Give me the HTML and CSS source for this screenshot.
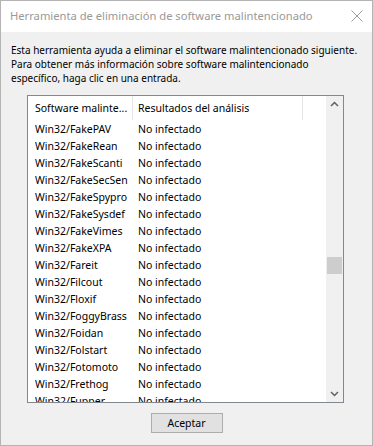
FILE: index.html
```html
<!DOCTYPE html>
<html lang="es">
<head>
    <meta charset="UTF-8">
    <title>Herramienta de eliminación de software malintencionado</title>
    <link rel="stylesheet" href="styles.css">
</head>
<body>
    <div class="window">
        <div class="titlebar">
            <span class="title">Herramienta de eliminación de software malintencionado</span>
            <svg class="close" width="12" height="12" viewBox="0 0 12 12">
                <path d="M0.5 0.5 L11.5 11.5 M11.5 0.5 L0.5 11.5" stroke="#9a9a9a" stroke-width="1" fill="none"/>
            </svg>
        </div>
        <div class="content">
            <p class="intro">Esta herramienta ayuda a eliminar el software malintencionado siguiente.<br>
            Para obtener más información sobre software malintencionado<br>
            específico, haga clic en una entrada.</p>

            <div class="listbox">
                <div class="table">
                    <div class="head">
                        <div class="c1">Software malinte...</div>
                        <div class="c2">Resultados del análisis</div>
                        <div class="c3"></div>
                    </div>
                    <div class="rows">
                        <div class="row"><div class="c1">Win32/FakePAV</div><div class="c2">No infectado</div></div>
                        <div class="row"><div class="c1">Win32/FakeRean</div><div class="c2">No infectado</div></div>
                        <div class="row"><div class="c1">Win32/FakeScanti</div><div class="c2">No infectado</div></div>
                        <div class="row"><div class="c1">Win32/FakeSecSen</div><div class="c2">No infectado</div></div>
                        <div class="row"><div class="c1">Win32/FakeSpypro</div><div class="c2">No infectado</div></div>
                        <div class="row"><div class="c1">Win32/FakeSysdef</div><div class="c2">No infectado</div></div>
                        <div class="row"><div class="c1">Win32/FakeVimes</div><div class="c2">No infectado</div></div>
                        <div class="row"><div class="c1">Win32/FakeXPA</div><div class="c2">No infectado</div></div>
                        <div class="row"><div class="c1">Win32/Fareit</div><div class="c2">No infectado</div></div>
                        <div class="row"><div class="c1">Win32/Filcout</div><div class="c2">No infectado</div></div>
                        <div class="row"><div class="c1">Win32/Floxif</div><div class="c2">No infectado</div></div>
                        <div class="row"><div class="c1">Win32/FoggyBrass</div><div class="c2">No infectado</div></div>
                        <div class="row"><div class="c1">Win32/Foidan</div><div class="c2">No infectado</div></div>
                        <div class="row"><div class="c1">Win32/Folstart</div><div class="c2">No infectado</div></div>
                        <div class="row"><div class="c1">Win32/Fotomoto</div><div class="c2">No infectado</div></div>
                        <div class="row"><div class="c1">Win32/Frethog</div><div class="c2">No infectado</div></div>
                        <div class="row"><div class="c1">Win32/Fupper</div><div class="c2">No infectado</div></div>
                    </div>
                </div>
                <div class="scrollbar">
                    <svg class="arrow" width="17" height="17" viewBox="0 0 17 17">
                        <path d="M5 10 L8.5 6.5 L12 10" stroke="#606060" stroke-width="1.5" fill="none"/>
                    </svg>
                    <div class="track">
                        <div class="thumb"></div>
                    </div>
                    <svg class="arrow" width="17" height="17" viewBox="0 0 17 17">
                        <path d="M5 7 L8.5 10.5 L12 7" stroke="#606060" stroke-width="1.5" fill="none"/>
                    </svg>
                </div>
            </div>

            <div class="actions">
                <button class="btn">Aceptar</button>
            </div>
        </div>
    </div>
</body>
</html>
```

FILE: styles.css
```css
body {
    margin: 0;
    font-family: "Noto Sans", "Open Sans", sans-serif;
    font-size: 10.5px;
    color: #000;
    background: #f0f0f0;
}
.window {
    box-sizing: border-box;
    width: 373px;
    height: 446px;
    border: 1px solid #b4b4b4;
    background-color: #f0f0f0;
    display: flex;
    flex-direction: column;
}
.titlebar {
    height: 31px;
    background-color: white;
    display: flex;
    align-items: center;
    justify-content: space-between;
    padding: 0 9px 0 9px;
}
.title {
    color: #999;
    font-size: 11.2px;
    margin-bottom: 2px;
}
.close {
    margin-bottom: 1px;
}
.content {
    padding: 11px 10px 0 10px;
}
.intro {
    margin: 0;
    font-size: 10px;
    line-height: 14px;
}
.listbox {
    margin: 10px 0 0 16px;
    width: 317px;
    height: 308px;
    box-sizing: border-box;
    border: 1px solid #828790;
    background-color: white;
    display: flex;
}
.table {
    flex: 1;
    overflow: hidden;
}
.head {
    display: flex;
    height: 24px;
    align-items: stretch;
}
.head div {
    display: flex;
    align-items: center;
    border-right: 1px solid #e5e5e5;
}
.head .c3 {
    border-right: none;
    flex: 1;
}
.c1 {
    box-sizing: border-box;
    width: 105px;
    padding-left: 7px;
    white-space: nowrap;
}
.c2 {
    box-sizing: border-box;
    width: 170px;
    padding-left: 5px;
    white-space: nowrap;
}
.row {
    display: flex;
    height: 17px;
    align-items: center;
}
.scrollbar {
    width: 17px;
    background-color: #f0f0f0;
    display: flex;
    flex-direction: column;
}
.track {
    flex: 1;
    position: relative;
}
.thumb {
    position: absolute;
    top: 144px;
    left: 1px;
    width: 15px;
    height: 17px;
    background-color: #cdcdcd;
}
.actions {
    display: flex;
    justify-content: center;
    margin-top: 10px;
}
.btn {
    width: 72px;
    height: 20px;
    font-family: "Noto Sans", "Open Sans", sans-serif;
    font-size: 10.5px;
    background-color: #e1e1e1;
    border: 1px solid #adadad;
    padding: 0;
}
```
